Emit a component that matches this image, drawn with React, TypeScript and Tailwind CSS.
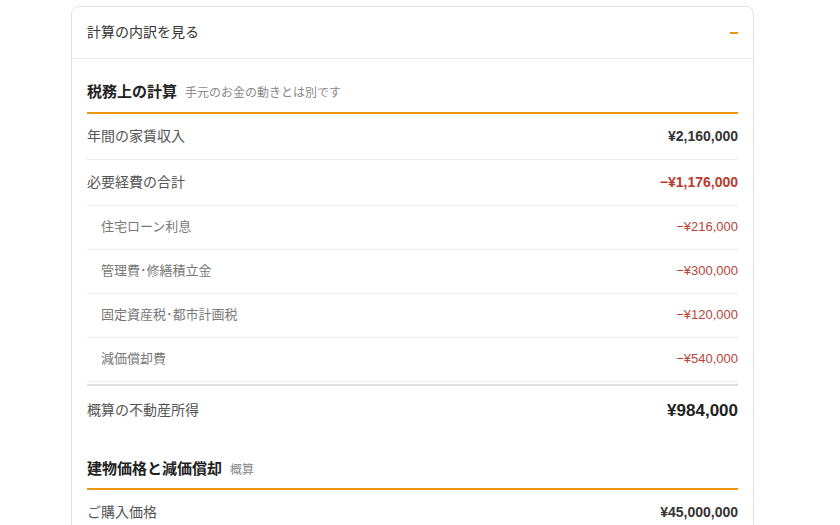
type Row = { label: string; value: string; kind: 'main' | 'neg' | 'sub' };

const taxRows: Row[] = [
  { label: '年間の家賃収入', value: '¥2,160,000', kind: 'main' },
  { label: '必要経費の合計', value: '−¥1,176,000', kind: 'neg' },
  { label: '住宅ローン利息', value: '−¥216,000', kind: 'sub' },
  { label: '管理費･修繕積立金', value: '−¥300,000', kind: 'sub' },
  { label: '固定資産税･都市計画税', value: '−¥120,000', kind: 'sub' },
  { label: '減価償却費', value: '−¥540,000', kind: 'sub' },
];

function SectionHead({ title, note }: { title: string; note: string }) {
  return (
    <div className="flex items-baseline gap-2 border-b-2 border-[#e8950f] pb-[8px]">
      <h3 className="text-[15px] font-bold text-[#222]">{title}</h3>
      <span className="text-[12px] text-[#888]">{note}</span>
    </div>
  );
}

function LineRow({ row }: { row: Row }) {
  if (row.kind === 'sub') {
    return (
      <div className="flex h-[44px] items-center justify-between border-b border-[#ececec] pl-[14px]">
        <span className="text-[13px] text-[#777]">{row.label}</span>
        <span className="text-[13px] text-[#b5453a]">{row.value}</span>
      </div>
    );
  }
  return (
    <div className="flex h-[46px] items-center justify-between border-b border-[#ececec]">
      <span className="text-[14px] text-[#555]">{row.label}</span>
      <span
        className={
          row.kind === 'neg'
            ? 'text-[14px] font-bold text-[#b83a2e]'
            : 'text-[14px] font-bold text-[#333]'
        }
      >
        {row.value}
      </span>
    </div>
  );
}

export default function App() {
  return (
    <div className="min-h-[525px] bg-white pt-[6px] font-['Liberation_Sans','Noto_Sans_CJK_JP',sans-serif]">
      <div className="ml-[71px] w-[683px] overflow-hidden rounded-lg border border-[#e3e3e3] bg-white">
        <div className="flex h-[52px] items-center justify-between border-b border-[#eaeaea] pl-[15px] pr-[15px]">
          <span className="text-[14px] text-[#333]">計算の内訳を見る</span>
          <span className="h-[2px] w-2 bg-[#e8950f]" />
        </div>
        <div className="px-[15px] pt-[22px]">
          <SectionHead title="税務上の計算" note="手元のお金の動きとは別です" />
          {taxRows.map((r) => (
            <LineRow key={r.label} row={r} />
          ))}
          <div className="mt-[2px] flex h-[52px] items-center justify-between border-t-2 border-[#dedede]">
            <span className="text-[14px] text-[#555]">概算の不動産所得</span>
            <span className="text-[17px] font-bold text-[#222]">¥984,000</span>
          </div>
          <div className="pt-[22px]">
            <SectionHead title="建物価格と減価償却" note="概算" />
          </div>
          <div className="flex h-[44px] items-center justify-between">
            <span className="text-[14px] text-[#555]">ご購入価格</span>
            <span className="text-[14px] font-bold text-[#333]">¥45,000,000</span>
          </div>
        </div>
      </div>
    </div>
  );
}
